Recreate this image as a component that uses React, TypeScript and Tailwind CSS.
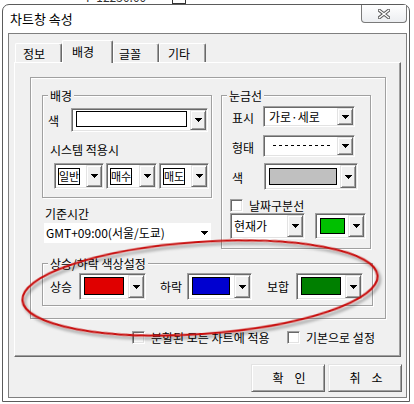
import React from 'react';

// Classic Windows 3D edges
const sunken =
  'border border-t-[#a0a0a0] border-l-[#a0a0a0] border-r-white border-b-white shadow-[inset_1px_1px_0_#696969,inset_-1px_-1px_0_#e3e3e3]';
const raised =
  'border border-t-[#e3e3e3] border-l-[#e3e3e3] border-r-[#696969] border-b-[#696969] shadow-[inset_1px_1px_0_#fff,inset_-1px_-1px_0_#a0a0a0]';
const etched = 'border border-[#a0a0a0] shadow-[inset_1px_1px_0_#fff,1px_1px_0_#fff]';

// small staircase arrow used by every drop-down button
const Arrow = () => (
  <svg width="7" height="4" viewBox="0 0 7 4" shapeRendering="crispEdges">
    <path d="M0 0h7v1h-1v1h-1v1h-1v1h-1v-1h-1v-1h-1v-1h-1z" fill="#000" />
  </svg>
);

const DropButton = () => (
  <div className={`${raised} w-[16px] h-full shrink-0 bg-[#f0f0f0] flex items-center justify-center`}>
    <Arrow />
  </div>
);

// sunken combo box: field on the left, drop button on the right
const Combo: React.FC<{ className: string; field?: string; children?: React.ReactNode }> = ({
  className,
  field = 'px-[3px] pt-[2px] pb-[3px]',
  children,
}) => (
  <div className={`${sunken} p-[1px] bg-white flex shrink-0 ${className}`}>
    <div className={`flex-1 min-w-0 flex ${field}`}>{children}</div>
    <DropButton />
  </div>
);

const Swatch: React.FC<{ color: string }> = ({ color }) => (
  <div className={`flex-1 border border-black ${color}`} />
);

const TextSwatch: React.FC<{ label: string }> = ({ label }) => (
  <div className="self-center border border-black bg-white text-[11px] leading-[15px] px-0">{label}</div>
);

const Checkbox = () => <div className={`${sunken} w-[13px] h-[13px] bg-white shrink-0`} />;

const Group: React.FC<{ title: string; className: string; children: React.ReactNode }> = ({
  title,
  className,
  children,
}) => (
  <div className={`relative ${etched} ${className}`}>
    <span className="absolute left-[5px] -top-[7px] px-[2px] bg-[#f0f0f0] leading-[13px]">{title}</span>
    {children}
  </div>
);

const CloseX = () => (
  <svg width="12" height="10" viewBox="0 0 12 10">
    <path d="M1.5 1.5L10.5 8.5M10.5 1.5L1.5 8.5" stroke="#5a5a5a" strokeWidth="3.4" strokeLinecap="square" />
    <path d="M1.5 1.5L10.5 8.5M10.5 1.5L1.5 8.5" stroke="#fff" strokeWidth="1.4" strokeLinecap="square" />
  </svg>
);

const DialogButton: React.FC<{ a: string; b: string }> = ({ a, b }) => (
  <button
    className={`${raised} w-[74px] h-[28px] bg-[#f0f0f0] leading-[14px] flex items-center justify-center gap-[11px] pl-[2px]`}
  >
    <span>{a}</span>
    <span>{b}</span>
  </button>
);

const tabs = [
  { label: '정보', w: 'w-[47px]', pl: 'pl-[7px]' },
  { label: '배경', w: 'w-[51px]', pl: 'pl-[9px]', active: true },
  { label: '글꼴', w: 'w-[46px]', pl: 'pl-[5px]' },
  { label: '기타', w: 'w-[47px]', pl: 'pl-[8px]' },
];

export default function App() {
  return (
    <div className="relative w-[414px] h-[404px] overflow-hidden bg-white text-black text-[12px] font-['Noto_Sans_CJK_KR','Liberation_Sans',sans-serif]">
      {/* chart peeking out above the dialog */}
      <div className="h-[4px] overflow-hidden">
        <div className="-mt-[10px] ml-[86px] flex items-center gap-[26px] leading-[14px] text-[#333]">
          <span>P 12250.00</span>
          <span className="w-[14px] h-[14px] border border-[#333]" />
        </div>
      </div>

      <div className="ml-[2px] w-[408px] h-[398px] border border-[#5b5b5b] rounded-t-[7px] bg-white flex flex-col">
        {/* title bar */}
        <div className="h-[28px] flex justify-between items-start">
          <span className="pl-[7px] pt-[6px] text-[13px] leading-[16px]">차트창 속성</span>
          <div className="mr-[2px] w-[46px] h-[18px] border border-t-0 border-[#7a7a7a] rounded-b-[4px] bg-gradient-to-b from-white to-[#eceef1] flex items-center justify-center">
            <CloseX />
          </div>
        </div>

        {/* client area */}
        <div className="ml-[5px] w-[399px] h-[365px] border border-[#7f7f7f] bg-[#f0f0f0]">
          <div className="ml-[5px] mt-[6px] w-[387px]">
            <div className="flex items-end h-[22px] pl-[1px]">
              {tabs.map((t) =>
                t.active ? (
                  <div
                    key={t.label}
                    className={`relative z-10 ${t.w} h-[23px] -mb-[1px] ${t.pl} pt-[3px] leading-[15px] bg-[#f0f0f0] border border-b-0 border-t-white border-l-white border-r-[#696969] rounded-t-[2px] shadow-[inset_-1px_0_0_#a0a0a0]`}
                  >
                    {t.label}
                  </div>
                ) : (
                  <div
                    key={t.label}
                    className={`${t.w} h-[19px] ${t.pl} pt-[2px] leading-[15px] bg-[#f0f0f0] border border-b-0 border-t-white border-l-white border-r-[#696969] rounded-t-[2px] shadow-[inset_-1px_0_0_#a0a0a0]`}
                  >
                    {t.label}
                  </div>
                )
              )}
            </div>

            {/* tab page */}
            <div className="w-[387px] h-[295px] border border-t-white border-l-white border-r-[#696969] border-b-[#696969] shadow-[inset_-1px_-1px_0_#a0a0a0]">
              <div className={`ml-[15px] mt-[14px] w-[356px] h-[242px] ${etched} pl-[11px] pt-[17px]`}>
                <div className="flex items-start gap-[9px]">
                  {/* left column */}
                  <div className="w-[170px]">
                    <Group title="배경" className="w-full h-[103px]">
                      <div className="flex items-center pt-[12px]">
                        <span className="w-[28px] pl-[5px] pt-[2px]">색</span>
                        <Combo className="w-[137px] h-[24px]" field="px-[3px] pt-[1px] pb-[3px]">
                          <Swatch color="bg-white" />
                        </Combo>
                      </div>
                      <div className="mt-[11px] pl-[7px] leading-[13px]">시스템 적용시</div>
                      <div className="mt-[7px] pl-[11px] flex gap-[2px]">
                        <Combo className="w-[50px] h-[26px]" field="px-[2px]">
                          <TextSwatch label="일반" />
                        </Combo>
                        <Combo className="w-[51px] h-[26px]" field="px-[2px]">
                          <TextSwatch label="매수" />
                        </Combo>
                        <Combo className="w-[50px] h-[26px]" field="px-[2px]">
                          <TextSwatch label="매도" />
                        </Combo>
                      </div>
                    </Group>
                    <div className="mt-[9px] pl-[3px] leading-[13px]">기준시간</div>
                    <div className="mt-[3px] ml-[2px] w-[167px] h-[20px] bg-white flex items-center justify-between pl-[2px] pr-[3px]">
                      <span className="leading-[14px]">GMT+09:00(서울/도쿄)</span>
                      <Arrow />
                    </div>
                  </div>

                  {/* grid line group */}
                  <Group title="눈금선" className="w-[150px] h-[154px] shrink-0">
                    <div className="flex items-center pt-[10px] pl-[10px]">
                      <span className="w-[31px] pt-[3px]">표시</span>
                      <Combo className="w-[92px] h-[21px]" field="px-[4px] items-center">
                        <span className="leading-[14px]">가로·세로</span>
                      </Combo>
                    </div>
                    <div className="flex items-center mt-[7px] pl-[10px]">
                      <span className="w-[31px] pt-[5px]">형태</span>
                      <Combo className="w-[92px] h-[22px]" field="pl-[8px] items-center">
                        <svg width="58" height="1">
                          <line x1="0" y1="0.5" x2="58" y2="0.5" stroke="#000" strokeDasharray="3 3" />
                        </svg>
                      </Combo>
                    </div>
                    <div className="flex items-center mt-[6px] pl-[10px]">
                      <span className="w-[32px] pt-[3px]">색</span>
                      <Combo className="w-[94px] h-[27px]" field="px-[3px] pt-[3px] pb-[3px]">
                        <Swatch color="bg-[#c0c0c0]" />
                      </Combo>
                    </div>
                    <div className="flex items-center gap-[6px] mt-[9px] pl-[8px]">
                      <Checkbox />
                      <span className="leading-[13px]">날짜구분선</span>
                    </div>
                    <div className="flex gap-[10px] mt-[1px] pl-[8px]">
                      <Combo className="w-[75px] h-[26px]" field="px-[2px] items-center">
                        <span className="leading-[14px]">현재가</span>
                      </Combo>
                      <Combo className="w-[51px] h-[26px]" field="px-[3px] pt-[3px] pb-[3px]">
                        <Swatch color="bg-[#00c000]" />
                      </Combo>
                    </div>
                  </Group>
                </div>

                {/* up / down colours */}
                <Group title="상승/하락 색상설정" className="mt-[14px] w-[331px] h-[43px]">
                  <div className="flex items-center pt-[9px] pl-[7px]">
                    <span className="w-[29px]">상승</span>
                    <Combo className="w-[67px] h-[27px]" field="pl-[3px] pr-[4px] pt-[2px] pb-[3px]">
                      <Swatch color="bg-[#e00000]" />
                    </Combo>
                    <span className="ml-[14px] w-[27px]">하락</span>
                    <Combo className="w-[65px] h-[27px]" field="pl-[3px] pr-[4px] pt-[2px] pb-[3px]">
                      <Swatch color="bg-[#0000d0]" />
                    </Combo>
                    <span className="ml-[15px] w-[29px]">보합</span>
                    <Combo className="w-[67px] h-[27px]" field="pl-[3px] pr-[4px] pt-[2px] pb-[3px]">
                      <Swatch color="bg-[#007f00]" />
                    </Combo>
                  </div>
                </Group>
              </div>

              <div className="mt-[12px] pl-[117px] flex items-center">
                <Checkbox />
                <span className="ml-[6px] w-[136px] leading-[13px]">분할된 모든 차트에 적용</span>
                <Checkbox />
                <span className="ml-[6px] leading-[13px]">기본으로 설정</span>
              </div>
            </div>
          </div>

          <div className="mt-[7px] pr-[4px] flex justify-end gap-[3px]">
            <DialogButton a="확" b="인" />
            <DialogButton a="취" b="소" />
          </div>
        </div>
      </div>

      {/* red annotation ellipse */}
      <svg className="absolute left-0 top-0 pointer-events-none" width="414" height="404">
        <defs>
          <filter id="shadow" x="-10%" y="-40%" width="120%" height="180%">
            <feDropShadow dx="2" dy="3" stdDeviation="1.6" floodColor="#000" floodOpacity="0.4" />
          </filter>
        </defs>
        <ellipse
          cx="200"
          cy="288"
          rx="178"
          ry="46"
          transform="rotate(-4 200 288)"
          fill="none"
          stroke="#c8100e"
          strokeWidth="2.2"
          filter="url(#shadow)"
        />
      </svg>
    </div>
  );
}
